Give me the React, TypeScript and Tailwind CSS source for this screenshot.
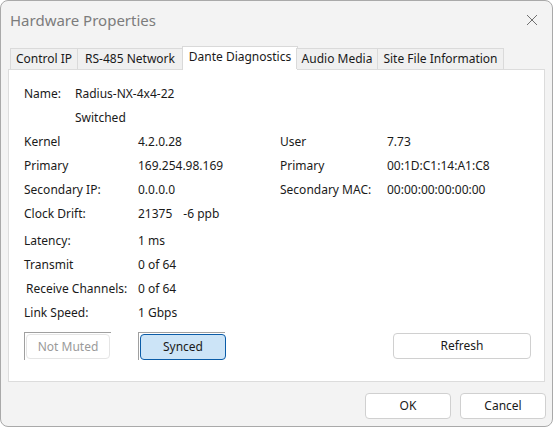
import React from 'react';

const tabs: [string, string][] = [
  ['Control IP', 'w-[68px]'],
  ['RS-485 Network', 'w-[106px]'],
  ['Dante Diagnostics', 'w-[116px]'],
  ['Audio Media', 'w-[82px]'],
  ['Site File Information', 'w-[127px]'],
];

const upperRows: [string, string, string?, string?][] = [
  ['Kernel', '4.2.0.28', 'User', '7.73'],
  ['Primary', '169.254.98.169', 'Primary', '00:1D:C1:14:A1:C8'],
  ['Secondary IP:', '0.0.0.0', 'Secondary MAC:', '00:00:00:00:00:00'],
];

const lowerRows: [string, string][] = [
  ['Latency:', '1 ms'],
  ['Transmit', '0 of 64'],
  ['Receive Channels:', '0 of 64'],
  ['Link Speed:', '1 Gbps'],
];

function Row({ label, value, label2, value2, indent }: { label: string; value: React.ReactNode; label2?: string; value2?: string; indent?: boolean }) {
  return (
    <div className="flex h-[24px] items-center">
      <span className={`w-[114px] ${indent ? 'pl-[2px]' : ''}`}>{label}</span>
      <span className="w-[142px]">{value}</span>
      {label2 && <span className="w-[107px]">{label2}</span>}
      {value2 && <span>{value2}</span>}
    </div>
  );
}

export default function App() {
  return (
    <div
      className="w-[553px] h-[427px] bg-[#f3f3f3] border border-[#a9a9a9] rounded-[8px] flex flex-col text-[12px] text-[#1a1a1a] overflow-hidden"
      style={{ fontFamily: '"Noto Sans", sans-serif' }}
    >
      {/* title bar */}
      <div className="h-[45px] flex items-start justify-between">
        <span className="ml-[9px] mt-[8px] text-[15px] text-[#7c7c7c]">Hardware Properties</span>
        <svg className="mt-[13px] mr-[14px]" width="12" height="12" viewBox="0 0 12 12">
          <path d="M1 1 L11 11 M11 1 L1 11" stroke="#707070" strokeWidth="1" />
        </svg>
      </div>

      {/* tab strip */}
      <div className="flex items-end pl-[9px] h-[23px] relative z-10">
        {tabs.map(([t, w]) => {
          const active = t === 'Dante Diagnostics';
          return (
            <div
              key={t}
              className={
                active
                  ? `${w} h-[24px] -mx-[1px] bg-white border border-b-0 border-[#d9d9d9] flex items-center justify-center -mb-[1px] pb-[3px]`
                  : `${w} h-[21px] bg-[#f0f0f0] border border-b-0 border-[#dadada] flex items-center justify-center -ml-[1px] first:ml-0`
              }
            >
              {t}
            </div>
          );
        })}
      </div>

      {/* tab page */}
      <div className="mx-[7px] h-[313px] bg-white border border-[#dcdcdc] pl-[15px] pt-[12px]">
        <div className="flex h-[24px] items-center">
          <span className="w-[51px]">Name:</span>
          <span>Radius-NX-4x4-22</span>
        </div>
        <div className="flex h-[24px] items-center pl-[51px]">Switched</div>
        {upperRows.map(([a, b, c, d]) => (
          <Row key={a + b} label={a} value={b} label2={c} value2={d} />
        ))}
        <Row
          label="Clock Drift:"
          value={
            <>
              21375<span className="ml-[11px]">-6 ppb</span>
            </>
          }
        />
        <div className="h-[3px]" />
        {lowerRows.map(([a, b]) => (
          <Row key={a} label={a} value={b} indent={a.startsWith('Receive')} />
        ))}

        <div className="flex items-start mt-[7px]">
          <div className="w-[87px] h-[28px] border-l border-t border-[#a0a0a0] pl-[1px] pt-[1px]">
            <div className="w-[84px] h-[25px] rounded-[4px] border border-[#e5e5e5] bg-white flex items-center justify-center text-[#9a9a9a]">
              Not Muted
            </div>
          </div>
          <div className="ml-[27px] w-[87px] h-[28px] border-l border-t border-[#a0a0a0] pl-[1px] pt-[1px]">
            <div className="w-[86px] h-[26px] rounded-[4px] border border-[#0a5ca8] bg-[#cce4f7] flex items-center justify-center">
              Synced
            </div>
          </div>
          <div className="ml-[168px] mt-[1px] w-[138px] h-[26px] rounded-[4px] border border-[#d0d0d0] bg-white flex items-center justify-center">
            Refresh
          </div>
        </div>
      </div>

      {/* dialog buttons */}
      <div className="flex justify-end gap-[9px] pr-[6px] mt-[11px]">
        <div className="w-[86px] h-[26px] rounded-[4px] border border-[#d0d0d0] bg-white flex items-center justify-center">OK</div>
        <div className="w-[86px] h-[26px] rounded-[4px] border border-[#d0d0d0] bg-white flex items-center justify-center">Cancel</div>
      </div>
    </div>
  );
}
